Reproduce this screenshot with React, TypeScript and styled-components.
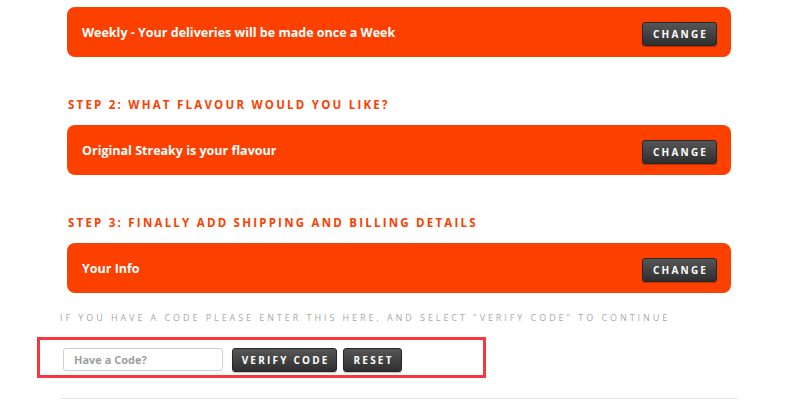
import React from "react";
import styled, { createGlobalStyle } from "styled-components";

const GlobalStyle = createGlobalStyle`
  body {
    margin: 0;
    background: #ffffff;
    font-family: "Open Sans", "Liberation Sans", sans-serif;
  }
`;

const Page = styled.div`
  width: 678px;
  margin-left: 60px;
  padding-top: 7px;
`;

const Panel = styled.div`
  margin: 0 7px;
  height: 50px;
  box-sizing: border-box;
  background: #fc4000;
  border-radius: 8px;
  display: flex;
  align-items: center;
  justify-content: space-between;
  padding: 0 14px 0 15px;
  color: #fff;
  font-size: 12.5px;
  font-weight: 700;

  button {
    margin-top: 4px;
  }
`;

const StepTitle = styled.h3`
  margin: 38px 8px 10px;
  line-height: 20px;
  font-size: 11.5px;
  font-weight: 700;
  letter-spacing: 2.23px;
  color: #fc4000;
  text-transform: uppercase;
`;

const DarkButton = styled.button<{ $width: number }>`
  width: ${(p) => p.$width}px;
  height: 24px;
  padding: 0;
  border: 1px solid #262626;
  border-radius: 3px;
  background: linear-gradient(#565656, #2f2f2f);
  box-shadow: 0 1px 1px rgba(0, 0, 0, 0.25);
  color: #fff;
  font-family: inherit;
  font-size: 10px;
  font-weight: 700;
  letter-spacing: 2.2px;
  text-indent: 2.2px;
  cursor: pointer;
`;

const Notice = styled.p`
  margin: 18px 0 0;
  line-height: 14px;
  font-size: 9px;
  letter-spacing: 2.93px;
  color: #a9a9a9;
  text-transform: uppercase;
  white-space: nowrap;
`;

const CodeForm = styled.div`
  margin: 12px 0 0 -23px;
  width: 449px;
  height: 41px;
  box-sizing: border-box;
  border: 3px solid #f7373b;
  padding: 8px 0 0 23px;
  display: flex;
  align-items: flex-start;
  gap: 6px;
`;

const CodeInput = styled.input`
  width: 160px;
  height: 23px;
  box-sizing: border-box;
  margin-right: 3px;
  border: 1px solid #cfcfcf;
  border-radius: 3px;
  padding: 0 10px;
  font-family: inherit;
  font-size: 11px;
  font-weight: 700;
  color: #555;
  outline: none;
  &::placeholder {
    color: #9e9e9e;
  }
`;

const Rule = styled.hr`
  margin: 20px 0 0;
  border: 0;
  border-top: 1px solid #e6e6e6;
`;

const steps = [
  { title: "", text: "Weekly - Your deliveries will be made once a Week" },
  { title: "Step 2: What flavour would you like?", text: "Original Streaky is your flavour" },
  { title: "Step 3: Finally add shipping and billing details", text: "Your Info" },
];

export default function App() {
  return (
    <>
      <GlobalStyle />
      <Page>
        {steps.map((s) => (
          <React.Fragment key={s.text}>
            {s.title && <StepTitle>{s.title}</StepTitle>}
            <Panel>
              <span>{s.text}</span>
              <DarkButton $width={75}>CHANGE</DarkButton>
            </Panel>
          </React.Fragment>
        ))}
        <Notice>If you have a code please enter this here, and select "verify code" to continue</Notice>
        <CodeForm>
          <CodeInput placeholder="Have a Code?" />
          <DarkButton $width={105}>VERIFY CODE</DarkButton>
          <DarkButton $width={59}>RESET</DarkButton>
        </CodeForm>
        <Rule />
      </Page>
    </>
  );
}
